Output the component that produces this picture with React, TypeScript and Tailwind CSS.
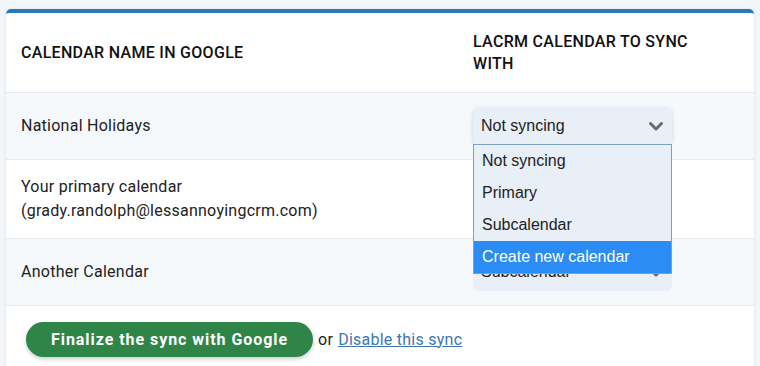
/* ─── Data ───────────────────────────────────────────────────────────────── */

const OPTIONS = ['Not syncing', 'Primary', 'Subcalendar', 'Create new calendar']

interface CalendarRow {
  id: string
  lines: string[]
  value: string
  open?: boolean
}

const ROWS: CalendarRow[] = [
  { id: 'holidays', lines: ['National Holidays'], value: 'Not syncing', open: true },
  {
    id: 'primary',
    lines: ['Your primary calendar', '(grady.randolph@lessannoyingcrm.com)'],
    value: 'Primary',
  },
  { id: 'another', lines: ['Another Calendar'], value: 'Subcalendar' },
]

/* ─── Select ─────────────────────────────────────────────────────────────── */

function FakeSelect({ value, open }: { value: string; open?: boolean }) {
  return (
    <div className="relative w-[199px]">
      <div
        className={
          open
            ? "flex h-[37px] items-center justify-between rounded-md bg-[#e8eff7] pl-2 pr-[9px] text-[16px] text-[#222] shadow-[0_1px_5px_rgba(0,0,0,0.14)] font-['Liberation_Sans',Arial,sans-serif]"
            : "flex h-[37px] items-center justify-between rounded-md bg-[#e8eff7] pl-2 pr-[9px] text-[16px] text-[#222] font-['Liberation_Sans',Arial,sans-serif]"
        }
      >
        <span>{value}</span>
        <svg width="14" height="9" viewBox="0 0 14 9" fill="none">
          <polyline
            points="1.5,1.5 7,7 12.5,1.5"
            stroke="#6b6b6b"
            strokeWidth="3"
            strokeLinecap="round"
            strokeLinejoin="round"
          />
        </svg>
      </div>

      {open && (
        <ul className="absolute left-0 top-[36px] z-10 w-[199px] border border-[#7f9ec4] bg-[#e8eff7] text-[16px] font-['Liberation_Sans',Arial,sans-serif]">
          {OPTIONS.map((opt, i) => (
            <li
              key={opt}
              className={
                i === OPTIONS.length - 1
                  ? 'flex h-[32px] items-center bg-[#2b8cf5] px-2 text-white'
                  : 'flex h-[32px] items-center px-2 text-[#222]'
              }
            >
              {opt}
            </li>
          ))}
        </ul>
      )}
    </div>
  )
}

/* ─── Page ───────────────────────────────────────────────────────────────── */

export default function App() {
  return (
    <div className="min-h-[366px] bg-[#f3f6f9] px-[6px] pt-[9px] font-['Roboto',sans-serif]">
      <div className="overflow-hidden rounded-t-[5px] border-t-4 border-[#2b7bb9] bg-white shadow-[0_0_3px_rgba(0,0,0,0.1)]">
        {/* Header */}
        <div className="grid grid-cols-[452px_1fr] border-b border-[#e3e9ef]">
          <div className="flex h-[79px] items-center px-[15px] text-[16px] font-medium uppercase tracking-[0.3px] text-[#111]">
            Calendar name in Google
          </div>
          <div className="flex h-[79px] items-center px-[15px] text-[16px] font-medium uppercase leading-[22px] tracking-[0.3px] text-[#111]">
            <span className="w-[235px]">LACRM calendar to sync with</span>
          </div>
        </div>

        {/* Rows */}
        {ROWS.map((row, idx) => (
          <div
            key={row.id}
            className={
              idx % 2 === 0
                ? 'grid grid-cols-[452px_1fr] border-b border-[#e3e9ef] bg-[#f6f9fc]'
                : 'grid grid-cols-[452px_1fr] border-b border-[#e3e9ef] bg-white'
            }
          >
            <div
              className={
                row.lines.length > 1
                  ? 'flex h-[78px] flex-col justify-center px-[15px] text-[16px] leading-[24px] tracking-[0.25px] text-[#222]'
                  : 'flex h-[66px] flex-col justify-center px-[15px] text-[16px] leading-[24px] tracking-[0.25px] text-[#222]'
              }
            >
              {row.lines.map((l) => (
                <span key={l}>{l}</span>
              ))}
            </div>
            <div className="flex items-center px-[15px]">
              <FakeSelect value={row.value} open={row.open} />
            </div>
          </div>
        ))}

        {/* Footer */}
        <div className="flex items-center gap-[5px] px-5 pb-6 pt-4 text-[16px] tracking-[0.25px]">
          <button className="h-[35px] rounded-full bg-[#2e8547] px-[25px] text-[16px] font-bold tracking-[0.95px] text-white shadow-[0_2px_4px_rgba(0,0,0,0.2)]">
            Finalize the sync with Google
          </button>
          <span className="text-[#222]">or</span>
          <a href="#" className="text-[#3b77b3] underline">
            Disable this sync
          </a>
        </div>
      </div>
    </div>
  )
}
